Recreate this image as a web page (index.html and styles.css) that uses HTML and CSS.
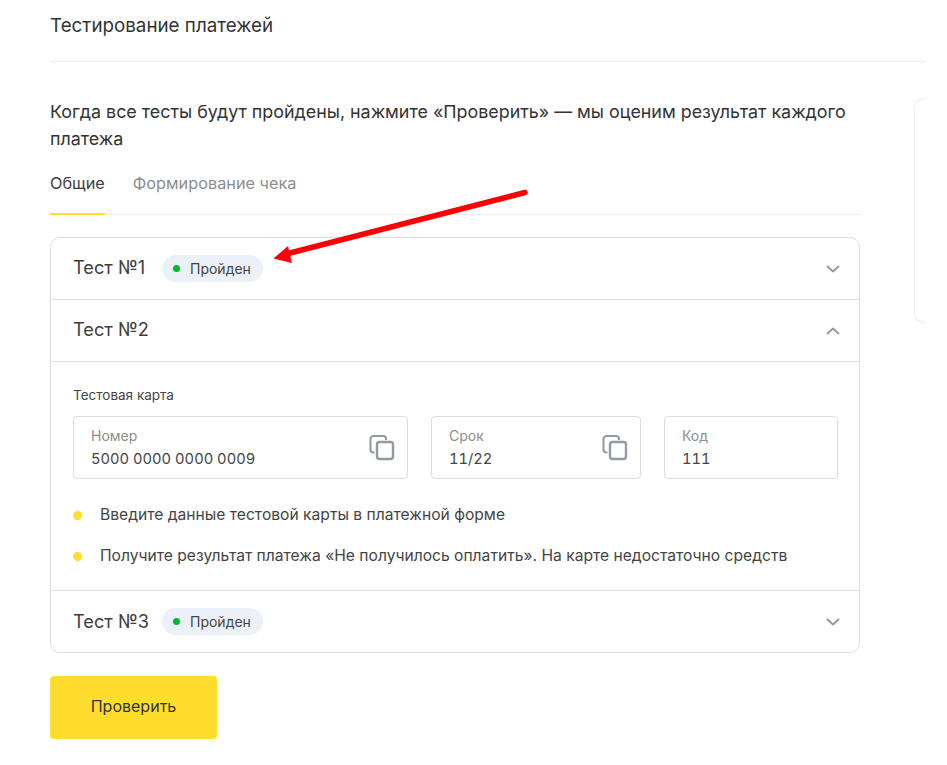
FILE: index.html
```html
<!DOCTYPE html>
<html lang="ru">
<head>
<meta charset="utf-8">
<title>Тестирование платежей</title>
<link rel="stylesheet" href="styles.css">
</head>
<body>
<div class="page">
  <header class="head"><h1 class="title">Тестирование платежей</h1></header>
  <div class="cols">
    <main class="main">
      <p class="lead">Когда все тесты будут пройдены, нажмите «Проверить» — мы оценим результат каждого платежа</p>
      <nav class="tabs">
        <span class="tab active">Общие</span>
        <span class="tab">Формирование чека</span>
      </nav>
      <section class="acc">
        <div class="row">
          <span class="row-title">Тест №1</span>
          <span class="badge"><i class="dot"></i>Пройден</span>
          <svg class="chev" viewBox="0 0 14 8" width="14" height="8"><path d="M1 1l6 5.500L13 1" fill="none" stroke="#9299a2" stroke-width="2"/></svg>
        </div>
        <div class="row">
          <span class="row-title">Тест №2</span>
          <svg class="chev" viewBox="0 0 14 8" width="14" height="8"><path d="M1 7l6-5.500L13 7" fill="none" stroke="#9299a2" stroke-width="2"/></svg>
        </div>
        <div class="body">
          <div class="card-label">Тестовая карта</div>
          <div class="fields">
            <div class="field f-num">
              <div class="fv"><span class="fl">Номер</span><span class="val">5000 0000 0000 0009</span></div>
              <svg class="copy" viewBox="0 0 26 26" width="26" height="26"><path d="M5.500 17.500H4.500a3 3 0 0 1-3-3V4a3 3 0 0 1 3-3h9.500a3 3 0 0 1 3 3v1" fill="none" stroke="#9299a2" stroke-width="2"/><rect x="8" y="7" width="16" height="17" rx="2.500" fill="none" stroke="#9299a2" stroke-width="2.400"/></svg>
            </div>
            <div class="field f-exp">
              <div class="fv"><span class="fl">Срок</span><span class="val">11/22</span></div>
              <svg class="copy" viewBox="0 0 26 26" width="26" height="26"><path d="M5.500 17.500H4.500a3 3 0 0 1-3-3V4a3 3 0 0 1 3-3h9.500a3 3 0 0 1 3 3v1" fill="none" stroke="#9299a2" stroke-width="2"/><rect x="8" y="7" width="16" height="17" rx="2.500" fill="none" stroke="#9299a2" stroke-width="2.400"/></svg>
            </div>
            <div class="field f-code">
              <div class="fv"><span class="fl">Код</span><span class="val">111</span></div>
            </div>
          </div>
          <ul class="steps">
            <li>Введите данные тестовой карты в платежной форме</li>
            <li>Получите результат платежа «Не получилось оплатить». На карте недостаточно средств</li>
          </ul>
        </div>
        <div class="row last">
          <span class="row-title">Тест №3</span>
          <span class="badge"><i class="dot"></i>Пройден</span>
          <svg class="chev" viewBox="0 0 14 8" width="14" height="8"><path d="M1 1l6 5.500L13 1" fill="none" stroke="#9299a2" stroke-width="2"/></svg>
        </div>
      </section>
      <button class="btn" type="button">Проверить</button>
    </main>
    <aside class="side"></aside>
  </div>
  <svg class="arrow" viewBox="0 0 947 765" width="947" height="765"><path d="M525 192.500L290 253" fill="none" stroke="#fd0006" stroke-width="5.500" stroke-linecap="round"/><path d="M273.500 258.500L288 246L292 263Z" fill="#fd0006"/></svg>
</div>
</body>
</html>
```
FILE: styles.css
```css
* { box-sizing: border-box; }
html, body { margin: 0; padding: 0; background: #fff; }
body { font-family: Inter, "Liberation Sans", sans-serif; color: #333; overflow: hidden; }
.page { position: relative; width: 947px; height: 765px; padding-left: 50px; overflow: hidden; }
.head { width: 876px; height: 62px; border-bottom: 1px solid #ebebeb; padding-top: 14px; }
.title { margin: 0; font-size: 18.800px; line-height: 24px; font-weight: 400; color: #333; }
.cols { display: flex; width: 876px; }
.main { width: 810px; flex: none; }
.side { width: 11px; height: 225px; margin: 36px 0 0 54px; flex: none; border: 1px solid #ebebeb; border-right: 0; border-radius: 10px 0 0 10px; }
.lead { margin: 36px 0 0; font-size: 17.860px; line-height: 27px; color: #333; }
.tabs { display: flex; gap: 28px; height: 47px; margin-top: 16px; border-bottom: 1px solid #ebebeb; }
.tab { height: 47px; padding-top: 4px; font-size: 16.300px; line-height: 22px; color: #8d8d8d; }
.tab.active { color: #3e3e3e; border-bottom: 2px solid #ffdd2d; }
.acc { margin-top: 22px; border: 1px solid #dcdcdc; border-radius: 10px; }
.row { display: flex; align-items: center; height: 62px; padding: 0 19px 0 22px; border-bottom: 1px solid #dcdcdc; }
.row.last { border-bottom: 0; height: 61px; }
.row-title { width: 74px; margin-bottom: 3px; font-size: 18.200px; line-height: 24px; color: #3e3e3e; white-space: nowrap; }
.row.last .row-title { margin-bottom: 1px; }
.badge { display: flex; align-items: center; height: 27px; margin-left: 15px; padding: 0 12px 0 11px; border-radius: 14px; background: #ecf1f7; font-size: 14px; color: #444; }
.dot { width: 7px; height: 7px; border-radius: 50%; background: #00b92d; margin-right: 10px; }
.chev { margin-left: auto; }
.body { padding: 24px 21px 0 22px; height: 229px; border-bottom: 1px solid #dcdcdc; }
.card-label { font-size: 13.500px; line-height: 18px; color: #444; }
.fields { display: flex; gap: 23px; margin-top: 12px; }
.field { display: flex; justify-content: space-between; align-items: center; height: 63px; padding: 0 12px 0 17px; border: 1px solid #dcdcdc; border-radius: 4px; }
.f-num { width: 335px; }
.f-exp { width: 210px; }
.f-code { width: 174px; }
.fv { display: flex; flex-direction: column; padding-top: 1px; }
.fl { font-size: 14px; line-height: 20px; color: #8d8d8d; }
.val { margin-top: 1px; font-size: 14.700px; line-height: 24px; color: #444; font-variant-numeric: tabular-nums; }
.steps { list-style: none; margin: 24px 0 0; padding: 0; }
.steps li { position: relative; padding-left: 27px; font-size: 15.640px; line-height: 24px; color: #444; margin-bottom: 17px; }
.steps li::before { content: ""; position: absolute; left: 0; top: 8px; width: 9px; height: 9px; border-radius: 50%; background: #ffdd2d; }
.btn { display: block; width: 167px; height: 63px; margin-top: 23px; padding: 0 0 3px; border: 0; border-radius: 4px; background: #ffdd2d; font: 400 16px Inter, "Liberation Sans", sans-serif; color: #333; }
.arrow { position: absolute; left: 0; top: 0; pointer-events: none; }
```
